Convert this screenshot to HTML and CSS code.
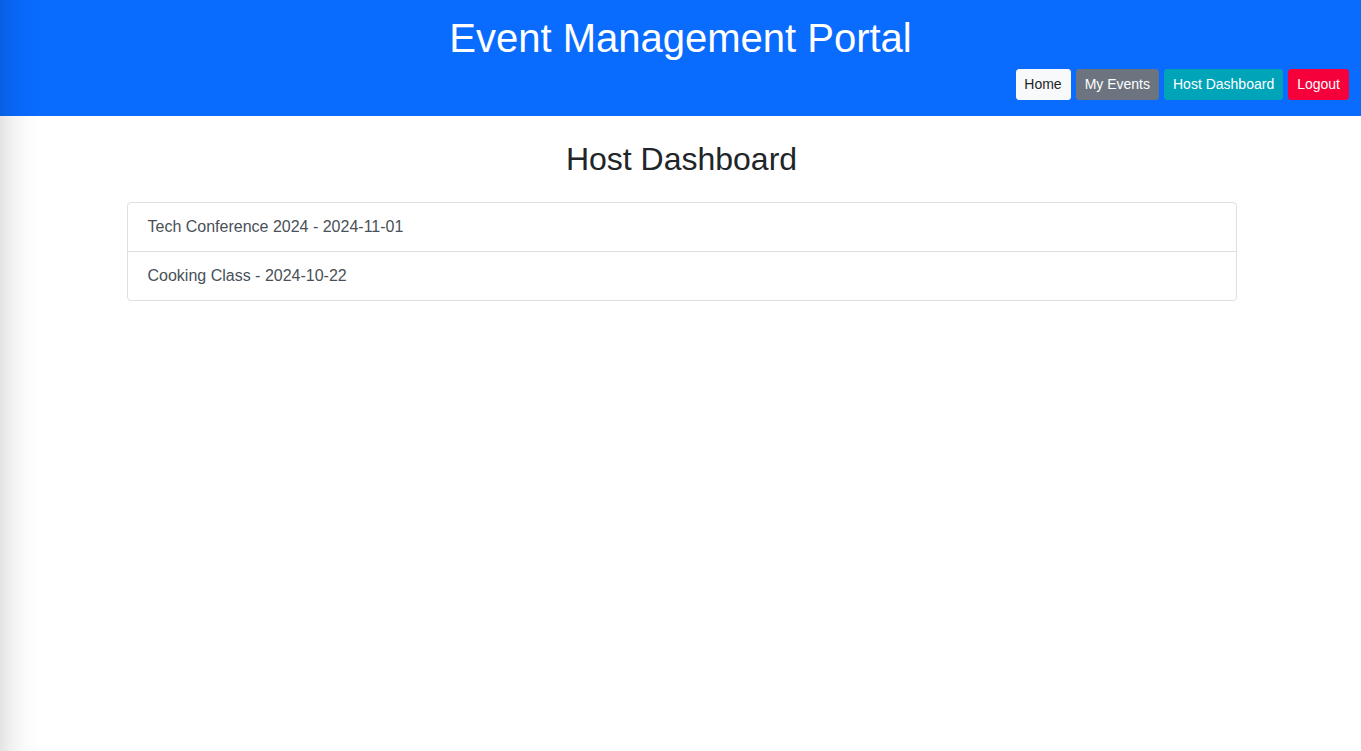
FILE: index.html
```html
<!DOCTYPE html>
<html lang="en">
<head>
<meta charset="utf-8">
<title>Event Management Portal</title>
<link rel="stylesheet" href="styles.css">
</head>
<body>
<header class="site-header">
  <h1 class="site-title">Event Management Portal</h1>
  <nav class="site-nav">
    <a class="btn btn-light" href="#">Home</a>
    <a class="btn btn-secondary" href="#">My Events</a>
    <a class="btn btn-info" href="#">Host Dashboard</a>
    <a class="btn btn-danger" href="#">Logout</a>
  </nav>
</header>
<main class="container">
  <h2 class="page-title">Host Dashboard</h2>
  <ul class="list-group">
    <li class="list-group-item">Tech Conference 2024 - 2024-11-01</li>
    <li class="list-group-item">Cooking Class - 2024-10-22</li>
  </ul>
</main>
<div class="edge-shadow"></div>
</body>
</html>
```
FILE: styles.css
```css
* { box-sizing: border-box; }
html, body { margin: 0; padding: 0; }
body {
  font-family: "Liberation Sans", Arial, Helvetica, sans-serif;
  font-size: 16px;
  line-height: 1.5;
  color: #212529;
  background: #fff;
  min-height: 751px;
}
.site-header {
  background: #0a6bff;
  color: #fff;
  padding: 14px 12px 16px;
  height: 116px;
}
.site-title {
  margin: 0 0 7px;
  font-size: 40px;
  font-weight: 400;
  line-height: 48px;
  text-align: center;
}
.site-nav {
  display: flex;
  justify-content: flex-end;
  gap: 5px;
}
.btn {
  display: inline-block;
  font-size: 14px;
  line-height: 21px;
  padding: 4px 8px;
  border: 1px solid transparent;
  border-radius: 3px;
  text-decoration: none;
}
.btn-light { background: #f8f9fa; color: #212529; border-color: #f8f9fa; padding: 4px 8px 4px 7px; }
.btn-secondary { background: #6c757f; color: #fff; border-color: #6c757f; }
.btn-info { background: #00a4b9; color: #fff; border-color: #00a4b9; }
.btn-danger { background: #f5003a; color: #fff; border-color: #f5003a; }
.container {
  width: 1140px;
  margin: 0 auto;
  padding: 0 14px 0 16px;
}
.page-title {
  margin: 24px 0 24px;
  font-size: 32px;
  font-weight: 400;
  line-height: 38px;
  text-align: center;
  color: #212529;
}
.list-group {
  list-style: none;
  margin: 0;
  padding: 0;
  border: 1px solid #dfdfdf;
  border-radius: 4px;
}
.list-group-item {
  padding: 12px 20px;
  color: #495057;
  line-height: 24px;
}
.list-group-item + .list-group-item {
  border-top: 1px solid #dfdfdf;
}
.edge-shadow {
  position: fixed;
  left: 0;
  top: 0;
  bottom: 0;
  width: 40px;
  pointer-events: none;
  background: linear-gradient(to right, rgba(0,0,0,0.11), rgba(0,0,0,0.05) 30%, rgba(0,0,0,0.015) 65%, rgba(0,0,0,0));
}
```
